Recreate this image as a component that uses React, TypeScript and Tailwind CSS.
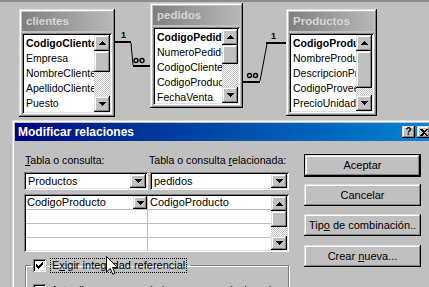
import React from 'react';

const raised =
  'shadow-[inset_-1px_-1px_0_#000,inset_1px_1px_0_#dfdfdf,inset_-2px_-2px_0_#808080,inset_2px_2px_0_#fff]';
const sunken =
  'shadow-[inset_1px_1px_0_#808080,inset_-1px_-1px_0_#fff,inset_2px_2px_0_#000,inset_-2px_-2px_0_#dfdfdf]';
const checker =
  'bg-[conic-gradient(#fff_25%,#c0c0c0_0_50%,#fff_0_75%,#c0c0c0_0)] bg-[length:2px_2px]';

function ArrowBtn({ dir, className = '' }: { dir: 'up' | 'down'; className?: string }) {
  return (
    <div className={`flex shrink-0 items-center justify-center bg-[#c0c0c0] ${raised} ${className}`}>
      <svg width="7" height="4" viewBox="0 0 7 4" shapeRendering="crispEdges">
        {dir === 'up' ? (
          <path d="M3 0h1v1h1v1h1v1h1v1H0V3h1V2h1V1h1z" fill="#000" />
        ) : (
          <path d="M0 0h7v1H6v1H5v1H4v1H3V3H2V2H1V1H0z" fill="#000" />
        )}
      </svg>
    </div>
  );
}

function ScrollBar({ up, thumb, down }: { up: string; thumb: string; down: string }) {
  return (
    <div className="flex w-[16px] shrink-0 flex-col">
      <ArrowBtn dir="up" className={up} />
      <div className={`shrink-0 bg-[#c0c0c0] ${raised} ${thumb}`} />
      <div className={`flex-1 ${checker}`} />
      <ArrowBtn dir="down" className={down} />
    </div>
  );
}

function TableWin({
  title,
  fields,
  className,
  thumb,
}: {
  title: string;
  fields: string[];
  className: string;
  thumb: string;
}) {
  return (
    <div className={`absolute flex flex-col bg-[#c0c0c0] p-[3px] ${raised} ${className}`}>
      <div className="h-[19px] shrink-0 bg-linear-to-r from-[#808080] to-[#b8b8b8] pl-[4px] text-[11.5px] font-bold leading-[19px] text-[#d6d6d6]">
        {title}
      </div>
      <div className={`mt-[2px] flex min-h-0 flex-1 bg-white p-[2px] ${sunken}`}>
        <div className="min-w-0 flex-1 overflow-hidden pl-[2px] pt-[1px] text-[10.5px] leading-[15px] text-black">
          {fields.map((f, i) => (
            <div key={f} className={`whitespace-nowrap ${i === 0 ? 'font-bold' : ''}`}>
              {f}
            </div>
          ))}
        </div>
        <ScrollBar up="h-[16px]" thumb={thumb} down="h-[16px]" />
      </div>
    </div>
  );
}

function Combo({ text, className = '' }: { text: string; className?: string }) {
  return (
    <div className={`flex h-[18px] bg-white p-[2px] ${sunken} ${className}`}>
      <div className="flex-1 pl-[2px] text-[11px] leading-[14px]">{text}</div>
      <ArrowBtn dir="down" className="w-[16px]" />
    </div>
  );
}

function Btn({ children, className = '' }: { children: React.ReactNode; className?: string }) {
  return (
    <div
      className={`flex h-[22px] items-center justify-center whitespace-nowrap bg-[#c0c0c0] text-[11px] ${raised} ${className}`}
    >
      {children}
    </div>
  );
}

function CheckBox({ checked }: { checked?: boolean }) {
  return (
    <div className={`flex h-[13px] w-[13px] shrink-0 items-center justify-center bg-white ${sunken}`}>
      {checked && (
        <svg width="7" height="7" viewBox="0 0 7 7" shapeRendering="crispEdges">
          <path d="M6 0h1v3H6v1H5v1H4v1H3v1H2V6H1V5H0V2h1v1h1v1h1V3h1V2h1V1h1z" fill="#000" />
        </svg>
      )}
    </div>
  );
}

export default function App() {
  return (
    <div className="relative h-[287px] w-[429px] overflow-hidden bg-[#c0c0c0] font-['Liberation_Sans',Arial,sans-serif] text-black">
      <div className="h-[2px] bg-[#8c8c8c]" />

      <TableWin
        title="clientes"
        fields={['CodigoCliente', 'Empresa', 'NombreCliente', 'ApellidoCliente', 'Puesto']}
        className="left-[19px] top-[9px] h-[108px] w-[96px]"
        thumb="h-[21px]"
      />
      <TableWin
        title="pedidos"
        fields={['CodigoPedido', 'NumeroPedido', 'CodigoCliente', 'CodigoProducto', 'FechaVenta']}
        className="left-[150px] top-[3px] h-[105px] w-[93px]"
        thumb="h-[19px]"
      />
      <TableWin
        title="Productos"
        fields={['CodigoProducto', 'NombreProducto', 'DescripcionProducto', 'CodigoProveedor', 'PrecioUnidad']}
        className="left-[286px] top-[9px] h-[107px] w-[91px]"
        thumb="h-[37px]"
      />

      {/* join lines */}
      <svg className="absolute left-0 top-0" width="429" height="120" fontFamily="Liberation Sans, Arial, sans-serif">
        <g stroke="#000" fill="none">
          <path d="M115 42H131" strokeWidth="2" />
          <path d="M131 43L133 65" strokeWidth="1" />
          <path d="M133 66H150" strokeWidth="2" />
          <path d="M243 82H260" strokeWidth="2" />
          <path d="M260 81L267 44" strokeWidth="1" />
          <path d="M266 43H286" strokeWidth="2" />
          <circle cx="136" cy="60.5" r="2" strokeWidth="1.4" />
          <circle cx="142" cy="60.5" r="2" strokeWidth="1.4" />
          <circle cx="249.5" cy="75.5" r="2" strokeWidth="1.4" />
          <circle cx="255.5" cy="75.5" r="2" strokeWidth="1.4" />
        </g>
        <text x="121" y="38" fontSize="9" fontWeight="bold" fill="#000">1</text>
        <text x="271" y="39" fontSize="9" fontWeight="bold" fill="#000">1</text>
      </svg>

      {/* dialog */}
      <div className={`absolute left-[12px] top-[120px] h-[180px] w-[423px] bg-[#c0c0c0] p-[3px] ${raised}`}>
        <div className="flex h-[18px] items-center bg-linear-to-r from-[#000080] to-[#1084d0] pl-[3px] pr-[2px]">
          <span className="flex-1 text-[12px] font-bold text-white">Modificar relaciones</span>
          <div className={`flex h-[12px] w-[13px] items-center justify-center bg-[#c0c0c0] text-[10px] font-bold leading-none ${raised}`}>
            ?
          </div>
          <div className={`ml-[2px] flex h-[12px] w-[13px] items-center justify-center bg-[#c0c0c0] ${raised}`}>
            <svg width="8" height="7" viewBox="0 0 8 7" shapeRendering="crispEdges">
              <path d="M0 0h2l2 2 2-2h2L5 3.5 8 7H6L4 5 2 7H0l3-3.5z" fill="#000" />
            </svg>
          </div>
        </div>

        <div className="flex">
          <div className="ml-[9px] w-[265px] pt-[12px]">
            <div className="flex h-[14px] whitespace-nowrap text-[10.6px] leading-[14px]">
              <span className="w-[125px] pl-[1px]">
                <span className="underline">T</span>abla o consulta:
              </span>
              <span>
                Tabla o consulta <span className="underline">r</span>elacionada:
              </span>
            </div>

            <div className="mt-[5px] flex gap-[2px]">
              <Combo text="Productos" className="w-[124px]" />
              <Combo text="pedidos" className="flex-1" />
            </div>

            <div className={`mt-[4px] flex h-[58px] bg-white p-[2px] ${sunken}`}>
              <div className="flex-1 overflow-hidden text-[11px] leading-[13px]">
                {[0, 1, 2, 3].map((r) => (
                  <div key={r} className="flex h-[14px] border-b border-[#c0c0c0]">
                    <div className="flex w-[122px] items-center border-r border-[#c0c0c0] pl-[1px]">
                      <span className="flex-1">{r === 0 ? 'CodigoProducto' : ''}</span>
                      {r === 0 && <ArrowBtn dir="down" className="h-[13px] w-[14px]" />}
                    </div>
                    <div className="flex-1 pl-[2px]">{r === 0 ? 'CodigoProducto' : ''}</div>
                  </div>
                ))}
              </div>
              <ScrollBar up="h-[15px]" thumb="h-[16px]" down="h-[14px]" />
            </div>

            <fieldset className="ml-[1px] mt-[6px] w-[263px] border border-[#808080] px-[5px] pb-[4px] shadow-[1px_1px_0_#fff,inset_1px_1px_0_#fff]">
              <legend className="flex items-center pl-[2px] pr-[4px]">
                <CheckBox checked />
                <span className="ml-[4px] whitespace-nowrap border border-dotted border-black px-[1px] text-[11px] leading-[13px]">
                  E<span className="underline">x</span>igir integridad referencial
                </span>
              </legend>
              <div className="mt-[11px] flex items-start pl-[2px]">
                <CheckBox />
                <span className="ml-[5px] whitespace-nowrap text-[11px] leading-[13px]">
                  Actualizar en cascada los campos relacionados
                </span>
              </div>
            </fieldset>
          </div>

          <div className="ml-[15px] flex w-[117px] flex-col pt-[13px]">
            <div className="h-[23px] border border-black">
              <div className={`flex h-full items-center justify-center bg-[#c0c0c0] text-[11px] ${raised}`}>
                Aceptar
              </div>
            </div>
            <Btn className="mt-[7px]">Cancelar</Btn>
            <Btn className="mt-[8px]">
              Tip<span className="underline">o</span>&nbsp;de combinación..
            </Btn>
            <Btn className="mt-[9px]">
              Crear&nbsp;<span className="underline">n</span>ueva...
            </Btn>
          </div>
        </div>
      </div>

      {/* mouse pointer */}
      <svg className="absolute left-[106px] top-[256px]" width="12" height="20" viewBox="0 0 12 20">
        <path d="M0.5 0.5V16L4.3 12.4L6.8 18.3L9 17.3L6.6 11.6H11.5Z" fill="#fff" stroke="#000" strokeWidth="1" />
      </svg>
    </div>
  );
}
